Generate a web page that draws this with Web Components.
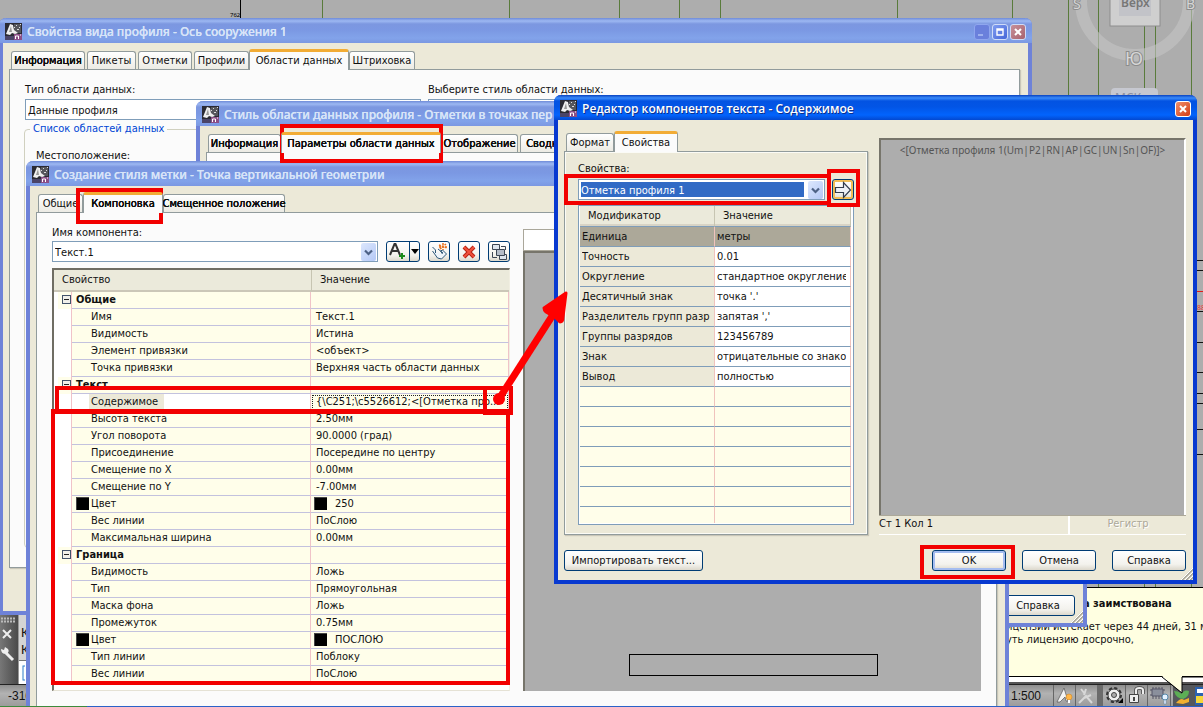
<!DOCTYPE html>
<html lang="ru">
<head>
<meta charset="utf-8">
<title>Редактор компонентов текста - Содержимое</title>
<style>
html,body{margin:0;height:100%;overflow:hidden}
body{font:11px/16px "DejaVu Sans Condensed","Noto Sans",sans-serif;color:#111;background:#adadad}
</style>
</head>
<body>
<cad-desktop></cad-desktop>
<script>
class Base extends HTMLElement{
  constructor(){super();this.attachShadow({mode:'open'});}
  connectedCallback(){if(!this.done){this.done=true;this.shadowRoot.innerHTML='<style>*{box-sizing:border-box}'+this.css()+'</style>'+this.html();}}
  css(){return ''}
  html(){return '<slot></slot>'}
  a(n,d=''){return this.getAttribute(n)??d}
}
const def=(n,c)=>customElements.define(n,c);

/* Luna-style window: title bar, icon, caption buttons, client area */
def('xp-window',class extends Base{
  css(){return `
  :host{display:flex;flex-direction:column;box-sizing:border-box;border:4px solid #6e82d8;border-top:0;border-radius:7px 7px 0 0;
    background:#ece9d8;--bar:linear-gradient(#6f8bd8,#9db8f2 3px,#7c97e0 6px,#7b98e3 12px,#82a3ea 20px,#7b98e2);--cap:#d8e4f8}
  :host([active]){border-color:#0839d0;--bar:linear-gradient(#0842c0,#3a8bfa 3px,#0353e2 6px,#0255e6 12px,#0264fd 20px,#0348d0);--cap:#fff}
  header{height:25px;margin:0 -4px;padding:2px 6px 0 6px;border-radius:7px 7px 0 0;background:var(--bar);display:flex;align-items:center;gap:5px;flex:none}
  h2{margin:0;flex:1;min-width:0;white-space:nowrap;overflow:hidden;font:500 12px/20px "Noto Sans",sans-serif;color:var(--cap);text-shadow:0 0 0 var(--cap)}
  :host([active]) h2{font:600 12px/20px "Open Sans",sans-serif;text-shadow:1px 1px #0a2f8c}
  .ico{width:17px;height:17px;flex:none}
  .caps{display:flex;gap:2px}
  .caps button{width:16px;height:16px;padding:0;border:1px solid #cfdcf8;border-radius:3px;background:linear-gradient(135deg,#7f9cf0,#4566d8);display:grid;place-items:center}
  .caps .min{border-color:#8fa6ee;background:#6a80dc}
  .caps .x{background:linear-gradient(135deg,#c79099,#a8626f)}
  :host([active]) .caps .x{border-color:#fff;background:linear-gradient(135deg,#f0906c,#d43c14)}
  .body{flex:1;display:flex;flex-direction:column;min-height:0;position:relative}
  .grip{position:absolute;right:0;bottom:0}`}
  html(){const m=this.a('caps');
  return `<header><svg class="ico" viewBox="0 0 17 17"><rect width="17" height="17" fill="#2a2a33"/><path d="M9 1h7v9H9z" fill="#55565c"/><path d="M11 2h1v1h-1zM14 4h1v1h-1zM12 6h2v1h-2zM15 1h1v1h-1zM9 4h1v1H9z" fill="#ddd"/><path d="M1 11L5 1l3 1 1 5 4 3-3 1-3-1-2 2z" fill="#f0f0f0"/><path d="M4 9l2-6 1 6z" fill="#999"/><path d="M0 13h9v4H0z" fill="#4a4468"/><path d="M9 11h8v6H9z" fill="#8b4f86"/><path d="M10.500 16v-3h3v3M15 12h1" fill="none" stroke="#fff"/></svg>
  <h2>${this.a('caption')}</h2><div class="caps">${m=='3'?`<button class="min" aria-label="Свернуть"><svg width="10" height="10"><path d="M1 8h5" stroke="#9db0ee" stroke-width="2"/></svg></button><button aria-label="Развернуть"><svg width="10" height="10"><path d="M2 2h6v6H2zM2 3h6" fill="none" stroke="#fff" stroke-width="1.400"/></svg></button>`:''}${m?`<button class="x" aria-label="Закрыть"><svg width="10" height="10"><path d="M2 2l6 6M8 2l-6 6" stroke="#fff" stroke-width="2"/></svg></button>`:''}</div></header>
  <div class="body"><slot></slot>${this.hasAttribute('grip')?'<svg class="grip" width="12" height="12"><path d="M1 12L12 1M5 12l7-7M9 12l3-3" stroke="#aaa79a" stroke-width="2"/><path d="M0 12L12 0M4 12l8-8M8 12l4-4" stroke="#fff"/></svg>':''}</div>`}
});

def('xp-tabs',class extends Base{
  css(){return `:host{display:flex;height:19px;margin-bottom:-1px;position:relative;padding-left:2px;gap:2px;flex:none}`}
});
def('xp-tab',class extends Base{
  css(){return `:host{display:block;width:var(--w)}
  button{font:inherit;color:inherit;width:100%;height:18px;padding:0;border:1px solid #919b9c;border-bottom:0;border-radius:3px 3px 0 0;background:linear-gradient(#fff,#ecebe4);white-space:nowrap;display:flex;justify-content:center;line-height:17px}
  :host([strong]) button{text-shadow:0 0 0 #000,0 0 0 #000}
  :host([on]){margin:-2px -2px 0;z-index:1}
  :host([on]) button{height:21px;background:#fbfbfb;border-top:3px solid #f2ac35}`}
  html(){return '<button role="tab"><slot></slot></button>'}
});
def('xp-page',class extends Base{
  css(){return `:host{display:block;box-sizing:border-box;border:1px solid #919b9c;background:#fbfbfb;box-shadow:1px 1px 1px #c9c6b8}`}
});
def('xp-button',class extends Base{
  css(){return `:host{display:block}
  button{font:inherit;color:inherit;width:100%;height:21px;padding:0;border:1px solid #003c74;border-radius:3px;background:linear-gradient(#fff,#f3f2ed 70%,#dcd8cc);white-space:nowrap;display:flex;align-items:center;justify-content:center}
  :host([default]) button{box-shadow:inset 0 0 0 2px #a5bdf0}
  :host([hot]) button{box-shadow:inset 0 0 0 2px #f2bd55}`}
  html(){return `<button aria-label="${this.a('label')}"><slot></slot></button>`.replace(' aria-label=""','')}
});
def('xp-combo',class extends Base{
  css(){return `:host{display:grid;height:21px;border:1px solid #7f9db9;box-sizing:border-box;background:#fff;padding:1px}
  select{grid-area:1/1;appearance:none;font:inherit;color:inherit;border:0;background:#fff;padding:2px 18px 0 1px;margin:0;min-width:0;width:100%;border-radius:0;outline:0}
  :host([picked]) select{background:linear-gradient(#316ac5,#316ac5) 1px 1px/calc(100% - 20px) 15px no-repeat #fff;color:#fff}
  svg{grid-area:1/1;justify-self:end;align-self:stretch;width:15px;height:100%;background:linear-gradient(135deg,#dce7fd,#b4c8f6);border-radius:2px;pointer-events:none}`}
  html(){return `<select aria-label="${this.a('label')}"><option>${this.a('value')}</option></select><svg viewBox="0 0 15 17" preserveAspectRatio="xMidYMid"><path d="M4 7l3.500 3.500L11 7" fill="none" stroke="#4d6185" stroke-width="2.200"/></svg>`}
});

/* component properties, grouped */
def('property-grid',class extends Base{
  css(){return `:host{display:block;border:2px solid #6f6d63;border-right:1px solid #f1efe2;border-bottom:1px solid #e5e2d5;background:#fff;padding-bottom:7px}
  table{border-collapse:separate;border-spacing:0;table-layout:fixed;width:100%}
  .c0{width:18px}.c1{width:239px}
  th,td{padding:0;text-align:left;font-weight:400;white-space:nowrap;overflow:hidden;vertical-align:top}
  thead th{height:20px;background:#ebeadb;border-bottom:2px solid #cbc7b8;line-height:20px;padding-left:8px}
  thead th+th{border-left:1px solid #c7c5b2;padding-left:8px}
  tbody tr>*{height:17px;line-height:16px;border-right:1px solid #f0c3c8}
  tbody tr>:nth-child(n+2){background:#fffeea;border-bottom:1px solid #c3c2de;padding-left:5px}
  tbody th{padding-left:19px!important}
  tr.g th{font-weight:700;padding-left:4px!important}
  tr.g td:first-child{background:linear-gradient(90deg,#fff 4px,#fffeea 4px)}
  td svg{display:block;margin:3px 0 0 8px}
  i{display:inline-block;width:13px;height:13px;background:#000;border:1px solid #444;border-width:1px 0 0 1px;vertical-align:top;margin:1px 2px 0 0}
  th i{margin-left:-15px}td i{margin:1px 8px 0 -2px}
  .cur th{background:#fff!important}.cur b{font-weight:400;background:#ece9d8;margin-left:-2px;padding:0 6px 0 2px;display:inline-block}
  .cur td:last-child{outline:1px dotted #222;outline-offset:-2px}`}
  html(){
  const R=[['*Общие'],['Имя','Текст.1'],['Видимость','Истина'],['Элемент привязки','&lt;объект&gt;'],['Точка привязки','Верхняя часть области данных'],['*Текст'],['!Содержимое','{\\C251;\\c5526612;&lt;[Отметка про...'],['Высота текста','2.50мм'],['Угол поворота','90.0000 (град)'],['Присоединение','Посередине по центру'],['Смещение по X','0.00мм'],['Смещение по Y','-7.00мм'],['#Цвет','250'],['Вес линии','ПоСлою'],['Максимальная ширина','0.00мм'],['*Граница'],['Видимость','Ложь'],['Тип','Прямоугольная'],['Маска фона','Ложь'],['Промежуток','0.75мм'],['#Цвет','ПОСЛОЮ'],['Тип линии','Поблоку'],['Вес линии','ПоСлою']];
  const box='<svg width="9" height="9"><rect x=".5" y=".5" width="8" height="8" fill="#f1f0ea" stroke="#43536b"/><path d="M2 4.500h5" stroke="#222"/></svg>';
  return `<table><colgroup><col class="c0"><col class="c1"><col></colgroup><thead><tr><th colspan="2" scope="col">Свойство</th><th scope="col">Значение</th></tr></thead><tbody>${R.map(([n,v=''])=>{
    const k=n[0];if('*!#'.includes(k))n=n.slice(1);
    return k=='*'?`<tr class="g"><td>${box}</td><th scope="row">${n}</th><td></td></tr>`:
      `<tr${k=='!'?' class="cur"':''}><td></td><th scope="row">${k=='#'?'<i></i>':''}${k=='!'?`<b>${n}</b>`:n}</th><td>${k=='#'?'<i></i>':''}${v}</td></tr>`}).join('')}</tbody></table>`}
});

/* text modifier table */
def('modifier-grid',class extends Base{
  css(){return `:host{display:block;border:1px solid #7f9db9;background:#fff;padding:0 2px 1px 1px}
  table{border-collapse:separate;border-spacing:0;table-layout:fixed;width:100%;background:#fffeea}
  .c0{width:135px}
  th,td{padding:0 4px 0 2px;text-align:left;font-weight:400;white-space:nowrap;overflow:hidden;vertical-align:top}
  div{overflow:hidden;height:19px;line-height:20px}
  thead th{padding-left:8px;border-right:1px solid #c7c5b2;box-shadow:inset 0 -2px #d8d4c6}
  tbody tr>*{height:20px;border-bottom:1px solid #7f9db9;border-right:1px solid #f0c3bd}
  tbody th{background:#ece9d8}
  tbody .v{background:#fff}
  tr.sel>*{background:#aca899!important}
  tbody tr:last-child>*{height:16px;border-bottom:0}
  thead tr>*{height:21px;line-height:20px;background:#ebeadb;border-bottom:1px solid #7f9db9}`}
  html(){
  const R=[['Единица','метры'],['Точность','0.01'],['Округление','стандартное округление'],['Десятичный знак',"точка '.'"],['Разделитель групп разря',"запятая ','"],['Группы разрядов','123456789'],['Знак','отрицательные со знаком'],['Вывод','полностью']];
  return `<table><colgroup><col class="c0"><col></colgroup><thead><tr><th scope="col">Модификатор</th><th scope="col">Значение</th></tr></thead><tbody>${R.map((r,i)=>`<tr${i?'':' class="sel"'}><th scope="row"><div>${r[0]}</div></th><td class="v"><div>${r[1]}</div></td></tr>`).join('')}${'<tr><td></td><td></td></tr>'.repeat(7)}</tbody></table>`}
});

/* drawing area behind the windows */
def('drawing-canvas',class extends Base{
  css(){return `:host{display:block;overflow:hidden;background:#adadad}svg{display:block;width:100%;height:100%}
  text{font-family:"Noto Sans",sans-serif}`}
  html(){return `<svg><g stroke="#597b3b">${[322,509,619,679,720,897,1012,1068,1098,1144,1155,1191].map(x=>`<path d="M${x}.500 0V600"/>`).join('')}</g>
  <path d="M240.500 0V20" stroke="#000"/><text x="230" y="17" font-size="6">762</text>
  <circle cx="1135" cy="1" r="54" fill="none" stroke="#c4c4c4" stroke-opacity=".6" stroke-width="12"/>
  <rect x="1110" y="-20" width="50" height="46" fill="#cfcfcf" stroke="#8e8e8e"/><rect x="1119" y="-20" width="32" height="36" fill="#c2c3c8"/>
  <text x="1121" y="7" font-size="12" font-weight="600" fill="#777">Верх</text>
  <g fill="#d6d6d6" stroke="#8c8c8c" stroke-width="2" paint-order="stroke"><text x="1073" y="9" font-size="14">S</text><text x="1186" y="9" font-size="14">В</text><text x="1125" y="65" font-size="18">Ю</text></g>
  <rect x="1111" y="88" width="47" height="20" rx="4" fill="#c6c8d0"/><text x="1115" y="102" font-size="12" fill="#8a8fa0">МСК</text>
  <g stroke="#111">${[260,270,311,342,372,393,403,429,454].map(y=>`<path d="M1190 ${y}.500H3000"/>`).join('')}</g>
  <path d="M1190 291.500h3000" stroke="#e01c1c"/><text x="1197" y="310" font-size="7" fill="#e33">88</text></svg>`}
});

def('command-palette',class extends Base{
  css(){return `:host{display:flex;height:69px;background:#d4d4d4}
  .l{width:19px;background:linear-gradient(90deg,#777,#4a4a4a);border-right:1px solid #999}
  .r{flex:1;padding:10px 0 0 2px;font:13px/17px "Liberation Mono",monospace;display:flex;flex-direction:column}
  p{margin:0}.in{flex:1;background:#fff;margin:1px 0 0 -2px;border-top:1px solid #777}`}
  html(){return `<div class="l"><svg width="19" height="69"><path d="M1 3.500h15M1 6.500h15" stroke="#bbb" stroke-width="2" stroke-dasharray="2 1"/><path d="M3 15l8 8M11 15l-8 8" stroke="#eee" stroke-width="2"/><path d="M6 38l7 7" stroke="#eee" stroke-width="3"/><path d="M5 32l-1 3-3-1q0 5 5 5 4-2 2-5z" fill="#eee"/></svg></div><div class="r"><p>К</p><p>К</p><div class="in"><svg width="6" height="22"><rect x="4" y="5" width="4" height="14" fill="none" stroke="#2f7fc8"/></svg></div></div>`}
});
def('status-bar',class extends Base{
  css(){return `:host{display:flex;height:22px;background:linear-gradient(#8e8e8e,#b2b2b2 40%,#9c9c9c);border-top:1px solid #222;align-items:center;font:12px/20px "Liberation Sans",sans-serif;padding-left:8px;box-sizing:border-box}
  .sp{flex:1}.t{width:192px;display:flex;height:100%;align-items:center}
  .s{width:42px}svg{flex:none}`}
  html(){return `<span>-310</span><span class="sp"></span><div class="t"><span class="s">1:500</span>
  <svg width="150" height="21"><g stroke="#666"><path d="M.500 0v21M22.500 0v21M72.500 0v21M94.500 0v21M117.500 0v21"/></g><path d="M44 0h6v21h-6z" fill="#6b6b6b"/>
  <path d="M4 17h3l5-5 1 4h2L11 3z" fill="#f4f4f4" stroke="#555" stroke-width=".7"/><circle cx="16" cy="12" r="3" fill="#ffb648" stroke="#c98020" stroke-width=".5"/><path d="M15 15h2v3h-2z" fill="#fff"/>
  <path d="M26 18l7-7 6 7M28 4l4 5M31 13l7-3M33 4l-2 6" fill="none" stroke="#d8d8d8" stroke-width="2"/>
  <circle cx="61" cy="10" r="6.500" fill="none" stroke="#333" stroke-width="3" stroke-dasharray="3 2"/><circle cx="61" cy="10" r="6" fill="#eee" stroke="#444"/><circle cx="61" cy="10" r="2.500" fill="#aaa" stroke="#444"/><path d="M70 18h-5l5-5z"/>
  <path d="M76.500 9.500h9v8h-9z" fill="#eee" stroke="#444"/><path d="M83 9V5q0-2 3.500-2T90 5v4" fill="none" stroke="#444" stroke-width="3.500"/><path d="M83 9V5q0-2 3.500-2T90 5v4" fill="none" stroke="#eee" stroke-width="2"/><path d="M81 12v4" stroke="#444" stroke-width="2"/>
  <path d="M100 2v12M103 2v12M106 2v12M109 2v12M97 5h15M97 10h15" stroke="#556"/><path d="M99 4h11v7H99z" fill="#8a8f9c" stroke="#556"/><circle cx="112" cy="12" r="3" fill="#e5f3ff" stroke="#58a"/><path d="M111 15h2v4h-2z" fill="#eef" stroke="#58a" stroke-width=".5"/>
  <path d="M120 0h30v21h-30z" fill="#55585c"/><path d="M121 6q8 0 10 8-8 0-10-8zM127 11q4-7 9-5 0 6-6 8z" fill="#5cae55"/><path d="M123 18q5-6 8-3l5-2v4l-6 2z" fill="#f2b02e"/><path d="M142 2h8v18h-8z" fill="#2c62b0"/><path d="M143 11h7v7h-7z" fill="#f4d63c"/><path d="M144 4h6v4h-6z" fill="#fff"/></svg></div>`}
});
def('license-balloon',class extends Base{
  css(){return `:host{display:block;background:#ffffe1;border-top:1px solid #000;border-bottom:1px solid #000;box-sizing:border-box;white-space:nowrap;overflow:hidden}
  h3{margin:8px 0 8px 77px;font:700 11px/16px "DejaVu Sans Condensed","Noto Sans",sans-serif}p{margin:0;line-height:13px}`}
  html(){return `<h3>а заимствована</h3><p>ицензии истекает через 44 дней, 31 м</p><p>уть лицензию досрочно,</p>`}
});

/* red call-outs */
def('mark-frame',class extends Base{
  css(){return `:host{display:block;box-sizing:border-box;border:4px solid #f20000;pointer-events:none}`}
  html(){return ''}
});
def('mark-arrow',class extends Base{
  css(){return `:host{display:block;pointer-events:none}svg{display:block}`}
  html(){return `<svg width="84" height="124"><g fill="#f00"><circle cx="10" cy="109" r="6"/><path d="M77 3L55 18q0 5 9 7L71 32q3 0 3-5z" stroke="#f00" stroke-width="3" stroke-linejoin="round"/></g><path d="M10 109L67 20" stroke="#f00" stroke-width="7"/></svg>`}
});

def('profile-view-pane',class extends Base{
  css(){return `:host{display:flex;flex-direction:column;flex:0 1 525px;padding:8px 8px 0 6px}
  xp-page{flex:1;padding:12px 14px 19px 15px;display:flex;flex-direction:column}
  .f{display:grid;grid-template-columns:396px 1fr;gap:1px 7px;padding-bottom:1px}
  fieldset{flex:1;margin:0 0 0 -1px;border:1px solid #d0d0bf;border-radius:4px;padding:11px 11px;min-width:0}
  legend{color:#0046d5;padding:0 3px;margin-left:-6px}`}
  html(){return `<xp-tabs role="tablist"><xp-tab strong style="--w:74px">Информация</xp-tab><xp-tab style="--w:49px">Пикеты</xp-tab><xp-tab style="--w:54px">Отметки</xp-tab><xp-tab style="--w:55px">Профили</xp-tab><xp-tab on style="--w:100px">Области данных</xp-tab><xp-tab style="--w:66px">Штриховка</xp-tab></xp-tabs>
  <xp-page><div class="f"><span>Тип области данных:</span><span>Выберите стиль области данных:</span><xp-combo label="Тип области данных" value="Данные профиля"></xp-combo><xp-combo label="Стиль области данных"></xp-combo></div>
  <fieldset><legend>Список областей данных</legend>Местоположение:</fieldset></xp-page>`}
});
def('band-style-pane',class extends Base{
  css(){return `:host{display:flex;flex-direction:column;flex:1;padding:8px 8px 0 6px}xp-page{flex:1}
  footer{display:flex;justify-content:flex-end;padding:17px 0 7px}xp-button{width:74px}`}
  html(){return `<xp-tabs role="tablist"><xp-tab strong style="--w:73px">Информация</xp-tab><xp-tab strong on style="--w:160px">Параметры области данных</xp-tab><xp-tab strong style="--w:77px">Отображение</xp-tab><xp-tab strong style="--w:50px">Сводка</xp-tab></xp-tabs><xp-page></xp-page><footer><xp-button>Справка</xp-button></footer>`}
});
def('label-style-pane',class extends Base{
  css(){return `:host{display:flex;flex-direction:column;flex:1;padding:8px 8px 0 6px}
  xp-page{flex:1;padding:12px 15px 0;display:grid;grid-template-columns:458px 1fr;column-gap:13px;align-content:start}
  .row{display:flex;gap:8px;align-items:center;padding-bottom:6px}.row xp-combo{flex:1}
  xp-button{width:22px}.w{width:34px}
  svg{display:block}
  .pv{display:grid;grid-template-rows:22px 1fr;padding-top:4px}
  .top{border:1px solid #aaa79a;background:#fff}
  .view{background:#adadad;border:2px solid #77756b;border-right:0;border-bottom:0;display:flex;align-items:flex-end;padding:0 103px 15px 104px}
  .view div{flex:1;height:22px;border:1px solid #000}`}
  html(){return `<xp-tabs role="tablist"><xp-tab style="--w:45px">Общие</xp-tab><xp-tab on strong style="--w:80px">Компоновка</xp-tab><xp-tab strong style="--w:122px">Смещенное положение</xp-tab></xp-tabs>
  <xp-page><div><div>Имя компонента:</div><div class="row"><xp-combo label="Имя компонента" value="Текст.1"></xp-combo>
  <xp-button class="w" label="Создать текст"><svg width="32" height="19"><path d="M3 13L7.500 2h1L13 13M5 9h6" fill="none" stroke="#333" stroke-width="2"/><path d="M15 11v6M12 14h6" stroke="#1a8a1a" stroke-width="2"/><path d="M22.500 0v19" stroke="#003c74"/><path d="M24 7h8l-4 5z"/></svg></xp-button>
  <xp-button label="Копировать"><svg width="19" height="19"><path d="M2.500 5l3 3v3M8 7l5 4M2.500 9l5 7 4 1 5-5-4-4-2 1 2 3" fill="#eef4fa" stroke="#2f5878" stroke-linejoin="round"/><path d="M9 3l8 3M13 1v7M10 7l6-5M9 5h9" stroke="#e8701c" stroke-width="1.500" stroke-dasharray="2 1"/></svg></xp-button>
  <xp-button label="Удалить"><svg width="16" height="16"><path d="M3 3l10 10M13 3L3 13" stroke="#b82414" stroke-width="4"/><path d="M3 3l10 10M13 3L3 13" stroke="#f0503c" stroke-width="2"/></svg></xp-button>
  <xp-button label="Порядок"><svg width="18" height="18"><g fill="#dde5ee" stroke="#3c4654"><path d="M11 3.500h4.500V7M2.500 9v5.500H7" fill="none"/><path d="M2.500 1.500h7v5h-7zM9.500 11.500h7v5h-7z"/><path d="M6.500 6.500h8v6h-8z" fill="#b4bcc8"/></g></svg></xp-button></div>
  <property-grid></property-grid></div>
  <div class="pv"><div class="top"></div><div class="view"><div></div></div></div></xp-page>`}
});
def('text-editor-pane',class extends Base{
  css(){return `:host{display:block;padding:13px 7px 9px 6px}
  .g{display:grid;grid-template-columns:304px 1fr;column-gap:11px}
  .l{display:flex;flex-direction:column}
  xp-page{background:#ece9d8;padding:9px 13px 9px;outline:1px solid #fbfbf6;outline-offset:-2px}
  .row{display:flex;gap:7px;padding:2px 0 5px}.row xp-combo{flex:1}.row xp-button{width:22px}
  .ed{display:grid;grid-template-rows:1fr 20px;padding-top:5px}
  .t{background:#adadad;border:2px solid #77756b;border-right:2px solid #fff;border-bottom:0;padding-top:2px;text-align:center;font:10px/16px "Noto Sans",sans-serif;color:#555;white-space:nowrap;overflow:hidden}
  .st{display:grid;grid-template-columns:1fr 118px;border-bottom:1px solid #fff;border-top:1px solid #aca899}
  .st span+span{border-left:2px solid #fff;text-align:center;color:#aca899;text-shadow:1px 1px #fff}
  footer{display:flex;gap:16px;padding-top:15px}footer xp-button{width:74px}footer xp-button:first-child{width:139px;margin-right:auto}
  svg{display:block}`}
  html(){return `<div class="g"><div class="l"><xp-tabs role="tablist"><xp-tab style="--w:48px">Формат</xp-tab><xp-tab on style="--w:64px">Свойства</xp-tab></xp-tabs>
  <xp-page><div>Свойства:</div><div class="row"><xp-combo picked label="Свойства" value="Отметка профиля 1"></xp-combo><xp-button hot label="Вставить"><svg width="18" height="18"><path d="M1.500 6.500h8v-5l7 7.500-7 7.500v-5h-8z" fill="#eef0f5" stroke="#333c4c" stroke-width="1.200"/></svg></xp-button></div><modifier-grid></modifier-grid></xp-page></div>
  <div class="ed"><div class="t">&lt;[Отметка профиля 1(Um|P2|RN|AP|GC|UN|Sn|OF)]&gt;</div><div class="st"><span>Ст 1 Кол 1</span><span>Регистр</span></div></div></div>
  <footer><xp-button>Импортировать текст...</xp-button><xp-button default>OK</xp-button><xp-button>Отмена</xp-button><xp-button>Справка</xp-button></footer>`}
});

def('cad-desktop',class extends Base{
  css(){return `:host{display:block;position:relative;height:100vh;overflow:hidden}
  drawing-canvas{height:100%}
  command-palette,status-bar,license-balloon,xp-window,mark-frame,mark-arrow,.strip,.tail,.task{position:absolute}
  command-palette{left:0;width:60px;bottom:23px}
  status-bar{left:0;right:0;bottom:1px}
  .strip{right:0;width:200px;bottom:23px;height:8px;background:#fff;border-bottom:2px solid #555}
  license-balloon{right:0;width:197px;top:587px;height:90px}
  .tail{right:0;width:48px;bottom:13px}
  .task{left:0;right:0;bottom:0;height:1px;background:linear-gradient(90deg,#3c8a3c 87px,#2b62c8 87px)}
  .w1{left:-1px;right:171px;top:18px;height:597px}
  .w2{left:196px;right:116px;top:101px;height:526px}
  .w3{left:26px;right:194px;top:161px;bottom:-40px}
  .w4{left:554px;right:6px;top:95px}
  mark-frame{left:var(--x);top:var(--y);width:var(--w);height:var(--h)}
  mark-arrow{left:489px;top:290px}`}
  html(){
  const F=[[280,124,163,39],[76,188,87,36],[564,174,267,31],[827,169,33,38],[55,386,458,28],[51,409,459,276],[483,386,30,29],[920,545,95,34]];
  return `<drawing-canvas></drawing-canvas><command-palette></command-palette><status-bar></status-bar><div class="strip"></div><license-balloon></license-balloon>
  <svg class="tail" width="48" height="18"><path d="M7 0l20 17V0z" fill="#ffffe1"/><path d="M7 1l20 16V1h21" fill="none" stroke="#000"/></svg>
  <xp-window class="w1" caps="3" caption="Свойства вида профиля - Ось сооружения 1"><profile-view-pane></profile-view-pane></xp-window>
  <xp-window class="w2" grip caption="Стиль области данных профиля - Отметки в точках пер"><band-style-pane></band-style-pane></xp-window>
  <xp-window class="w3" caption="Создание стиля метки - Точка вертикальной геометрии"><label-style-pane></label-style-pane></xp-window>
  <div class="task"></div>
  <xp-window class="w4" active grip caps="1" caption="Редактор компонентов текста - Содержимое"><text-editor-pane></text-editor-pane></xp-window>
  ${F.map(([x,y,w,h])=>`<mark-frame style="--x:${x}px;--y:${y}px;--w:${w}px;--h:${h}px"></mark-frame>`).join('')}<mark-arrow></mark-arrow>`}
});
</script>
</body>
</html>
